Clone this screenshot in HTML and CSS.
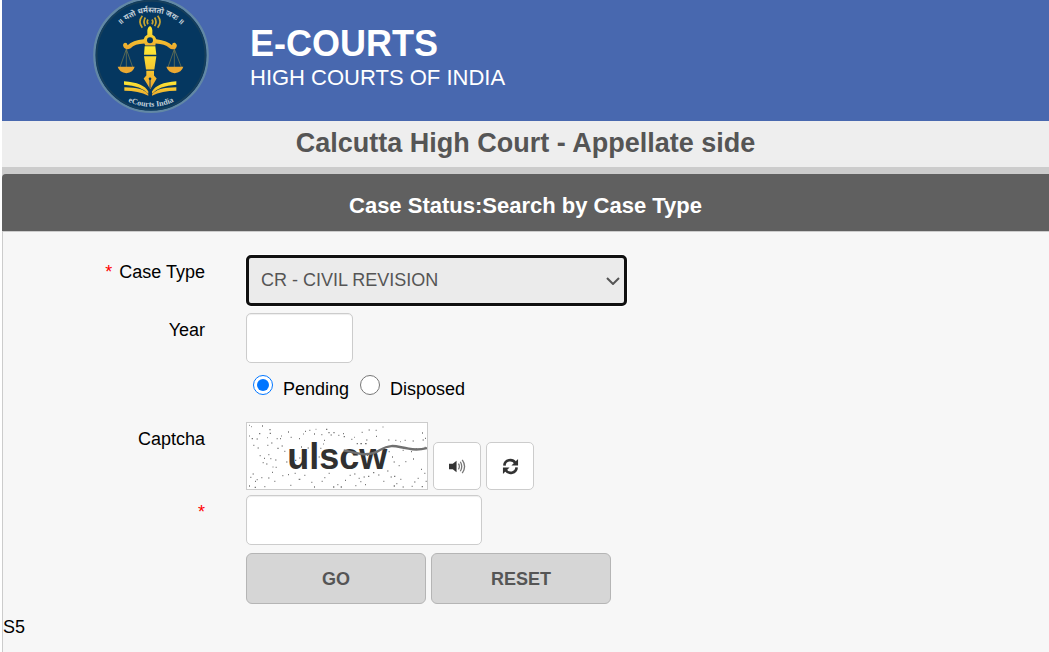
FILE: index.html
```html
<!DOCTYPE html>
<html lang="en">
<head>
<meta charset="utf-8">
<meta name="viewport" content="width=device-width, initial-scale=1">
<title>Case Status: Search by Case Type</title>
<link rel="stylesheet" href="styles.css">
</head>
<body>
<header class="site-header">
  <svg class="logo" viewBox="18 0 360 350" role="img" aria-label="eCourts India">
    <defs>
      <linearGradient id="gold" x1="0" y1="0" x2="0" y2="1"><stop offset="0" stop-color="#ffec35"/><stop offset="1" stop-color="#eda52d"/></linearGradient>
      <path id="arc-top" d="M70 165A128 128 0 0 1 326 165"/>
      <path id="arc-bottom" d="M43 165A155 155 0 0 0 353 165"/>
    </defs>
    <circle cx="198" cy="165" r="170" fill="#053760" stroke="#6288a5" stroke-width="7"/>
    <circle cx="198" cy="165" r="163" fill="none" stroke="#173f5b" stroke-width="5"/>
    <g class="logo-text">
      <text font-size="23"><textPath href="#arc-top" startOffset="50%">॥ यतो धर्मस्ततो जयः ॥</textPath></text>
      <text class="logo-name" font-size="24"><textPath href="#arc-bottom" startOffset="50%">eCourts India</textPath></text>
    </g>
    <g fill="none" stroke="#c9a630" stroke-width="5">
      <path d="M172 47Q158 65 172 83M181 52Q173 65 181 78M189 58Q184 65 189 72M218 47Q232 65 218 83M209 52Q217 65 209 78M201 58Q206 65 201 72"/>
    </g>
    <path fill="url(#gold)" d="M187 90Q190 78 195 78Q200 78 202 90V104Q211 108 214 117Q248 121 261 135Q262 126 270 128Q280 135 272 145Q261 151 252 143Q240 131 212 130L211 136H181L178 130Q149 131 137 144Q125 151 117 143Q110 132 120 128Q127 128 128 135Q143 120 176 117Q178 108 187 104Z"/>
    <circle cx="195" cy="120" r="9" fill="#053760"/>
    <path fill="url(#gold)" d="M179 138H211L214 164H177ZM177 168H214L208 208H183ZM184 212H207L207 226L215 235L196 267L176 235L184 226Z"/>
    <path d="M195 265V238" stroke="#053760" stroke-width="3"/><circle cx="195" cy="236" r="4" fill="#053760"/>
    <path d="M124 147L105 201M124 147V201M124 147L143 201M268 147L249 201M268 147V201M268 147L289 201" fill="none" stroke="#7e8150" stroke-width="2"/>
    <path fill="#eba832" d="M98 200H149Q145 217 124 219Q103 217 98 200ZM244 200H295Q290 217 269 219Q249 217 244 200Z"/>
    <path fill="url(#gold)" d="M117 243Q176 247 190 274V281Q169 257 117 254ZM274 243Q215 247 201 274V281Q222 257 274 254ZM118 261Q176 261 190 283V287Q160 272 118 272ZM274 261Q216 261 201 283V287Q231 272 274 272Z"/>
  </svg>
  <div>
    <div class="brand">E-COURTS</div>
    <div class="tagline">HIGH COURTS OF INDIA</div>
  </div>
</header>
<h1 class="court-name">Calcutta High Court - Appellate side</h1>
<main class="panel-wrap">
  <h2 class="panel-title">Case Status:Search by Case Type</h2>
  <form class="panel">
    <div class="row">
      <label class="label" for="case-type"><span class="required">*</span> Case Type</label>
      <div class="select-box">
        <select class="field case-type" id="case-type"><option>CR - CIVIL REVISION</option></select>
        <svg class="chevron" viewBox="0 0 14 8" aria-hidden="true"><path fill="none" stroke="#555" stroke-width="2" d="M1 1L7 7L13 1"/></svg>
      </div>
    </div>
    <div class="row">
      <label class="label" for="year">Year</label>
      <input class="field year" id="year" type="text">
    </div>
    <div class="row">
      <span class="label"></span>
      <div class="radios">
        <input class="radio" type="radio" name="status" id="pending" checked><label for="pending">Pending</label>
        <input class="radio" type="radio" name="status" id="disposed"><label for="disposed">Disposed</label>
      </div>
    </div>
    <div class="row row-tight">
      <span class="label">Captcha</span>
      <div class="captcha">
        <svg class="captcha-image" viewBox="15 15 540 198" role="img" aria-label="Captcha">
          <path class="noise" d="M22 22h2M28 26h2M60 24h3M82 35h4M83 46h4M51 47h4M22 54h2M29 62h4M44 63h3M76 59h2M104 62h3M114 62h3M118 54h2M146 58h3M138 42h3M171 62h3M189 40h3M183 48h2M202 37h3M216 48h3M221 34h2M238 50h3M252 34h4M259 44h4M274 44h4M266 51h3M246 67h3M243 78h2M289 52h3M303 47h3M305 56h4M328 64h3M337 58h2M359 43h3M344 77h4M355 77h5M369 77h5M373 66h3M380 36h3M401 37h3M422 27h2M402 55h3M439 66h3M460 67h3M474 71h2M488 67h3M512 69h3M540 45h3M549 61h3M542 66h3M482 97h3M507 101h3M521 93h4M548 88h3M34 82h3M47 90h3M76 82h3M88 75h3M106 91h4M119 84h3M127 100h3M147 95h3M177 87h3M197 90h3M235 91h3M53 113h3M79 110h3M66 121h3M85 122h3M100 126h3M62 134h3M73 138h3M92 147h2M101 148h3M133 132h3M159 127h4M172 120h3M184 139h3M216 112h3M230 117h3M278 124h3M305 118h3M353 105h3M361 120h3M375 112h3M440 101h3M450 117h3M455 132h3M470 143h3M490 131h3M513 123h3M537 154h3M547 166h3M32 168h3M25 178h3M39 190h3M44 185h3M21 204h3M38 208h4M67 206h3M58 179h3M79 180h3M90 163h3M97 190h3M121 173h3M138 170h3M145 202h3M158 166h3M170 184h5M187 172h3M208 193h3M216 207h3M239 190h3M247 179h3M260 166h3M273 207h4M286 200h3M296 207h4M309 187h3M323 172h3M337 168h3M350 181h3M365 177h3M378 175h4M355 191h3M340 203h3M369 200h3M393 164h4M409 171h3M424 190h3M436 159h3M446 177h3M456 175h4M475 184h3M463 197h3M455 204h4M482 207h3M509 205h3M517 192h3M539 206h4M551 190h3M527 181h3"/>
          <text class="captcha-text" x="136" y="153">ulscw</text>
          <path d="M305 97C345 107 380 118 414 96C450 75 464 87 500 92C522 97 537 95 555 90" fill="none" stroke="#707070" stroke-width="7"/>
        </svg>
        <button class="icon-button" type="button" aria-label="Play captcha">
          <svg class="icon" viewBox="0 0 18 18"><path fill="#333" d="M0 6H4L8 3V15L4 12H0Z"/><path fill="none" stroke="#777" stroke-width="1.4" d="M10 6Q12 9 10 12M12 4Q15 9 12 14M14 2Q19 9 14 16"/></svg>
        </button>
        <button class="icon-button" type="button" aria-label="Refresh captcha">
          <svg class="icon" viewBox="0 0 18 18"><path fill="none" stroke="#333" stroke-width="2.8" d="M2.500 8C3 1.500 11 .5 14 5M15.500 10C15 16.500 7 17.500 4 13"/><path fill="#333" d="M17 1V8H10ZM1 17V10H8Z"/></svg>
        </button>
      </div>
    </div>
    <div class="row">
      <label class="label required" for="captcha" aria-label="Captcha text">*</label>
      <input class="field captcha-input" id="captcha" type="text">
    </div>
    <div class="row">
      <span class="label"></span>
      <div class="actions">
        <button class="action" type="button">GO</button>
        <button class="action" type="reset">RESET</button>
      </div>
    </div>
    <div class="server">S5</div>
  </form>
</main>
</body>
</html>
```
FILE: styles.css
```css
* {
  box-sizing: border-box;
}

body {
  margin: 0;
  padding-left: 2px;
  min-height: 100vh;
  display: flex;
  flex-direction: column;
  background: #fff;
  color: #000;
  font: 18px/22px "Liberation Sans", Arial, sans-serif;
}

.site-header {
  display: flex;
  align-items: flex-start;
  gap: 39px;
  padding: 0 0 4px 89px;
  background: #4868af;
  color: #fff;
}

.logo {
  width: 120px;
  height: 117px;
}

.logo-text {
  fill: #c3d0da;
  font-family: "Noto Sans", "Liberation Serif", serif;
  font-weight: bold;
  text-anchor: middle;
}

.logo-name {
  font-family: "Liberation Serif", serif;
}

.brand {
  padding-top: 24px;
  font-size: 36px;
  font-weight: bold;
  line-height: 40px;
}

.tagline {
  font-size: 22px;
  line-height: 28px;
}

.court-name {
  margin: 0;
  padding: 6px 0 8px;
  background: #eee;
  color: #555;
  font-size: 27px;
  line-height: 32px;
  text-align: center;
}

.panel-wrap {
  flex: 1;
  display: flex;
  flex-direction: column;
  padding-top: 7px;
  background: #ccc;
}

.panel-title {
  margin: 0;
  padding: 19px 0 12px;
  border-radius: 4px 0 0;
  background: #606060;
  color: #fff;
  font-size: 22px;
  line-height: 26px;
  text-align: center;
}

.panel {
  flex: 1;
  padding-top: 23px;
  border-top: 1px solid #ccc;
  border-left: 1px solid #ccc;
  background: #f7f7f7;
}

.row {
  display: flex;
  gap: 41px;
  margin-bottom: 7px;
}

.row-tight {
  margin-bottom: 5px;
}

.label {
  flex: 0 0 202px;
  padding-top: 6px;
  text-align: right;
}

.required {
  color: #f00;
}

.label .required {
  margin-right: 2px;
}

.field {
  height: 50px;
  padding: 0 12px;
  border: 1px solid #ccc;
  border-radius: 5px;
  background: #fff;
  box-shadow: inset 0 1px 1px #eee;
  color: #555;
  font: inherit;
}

.select-box {
  display: grid;
  align-items: center;
}

.case-type {
  grid-area: 1 / 1;
  width: 381px;
  height: 51px;
  padding: 0 12px 2px;
  border: 3px solid #101010;
  background: #ebebeb;
  box-shadow: 0 0 0 1px #fff;
  appearance: none;
}

.chevron {
  grid-area: 1 / 1;
  justify-self: end;
  width: 14px;
  height: 8px;
  margin-right: 7px;
  pointer-events: none;
}

.year {
  width: 107px;
}

.radios {
  display: flex;
  align-items: center;
  height: 45px;
  padding: 0 0 15px 7px;
}

.radios label {
  padding: 7px 11px 0 10px;
}

.radio {
  width: 20px;
  height: 20px;
  margin: 0;
  accent-color: #0075ff;
}

.captcha {
  display: flex;
  align-items: flex-end;
  gap: 5px;
}

.captcha-image {
  width: 182px;
  height: 68px;
  border: 1px solid #ccc;
  background: #fff;
}

.captcha-text {
  fill: #303030;
  font-size: 108px;
  font-weight: bold;
}

.noise {
  stroke: #777;
  stroke-width: 4;
}

.icon-button {
  display: grid;
  place-items: center;
  width: 48px;
  height: 48px;
  padding: 0;
  border: 1px solid #ccc;
  border-radius: 5px;
  background: #fff;
}

.icon {
  width: 17px;
  height: 17px;
}

.captcha-input {
  width: 236px;
}

.actions {
  display: flex;
  gap: 5px;
  padding-top: 1px;
}

.action {
  width: 180px;
  height: 51px;
  border: 1px solid #b5b5b5;
  border-radius: 6px;
  background: #d6d6d6;
  color: #555;
  font: inherit;
  font-weight: bold;
}

.server {
  padding: 5px 0 24px;
}
```
